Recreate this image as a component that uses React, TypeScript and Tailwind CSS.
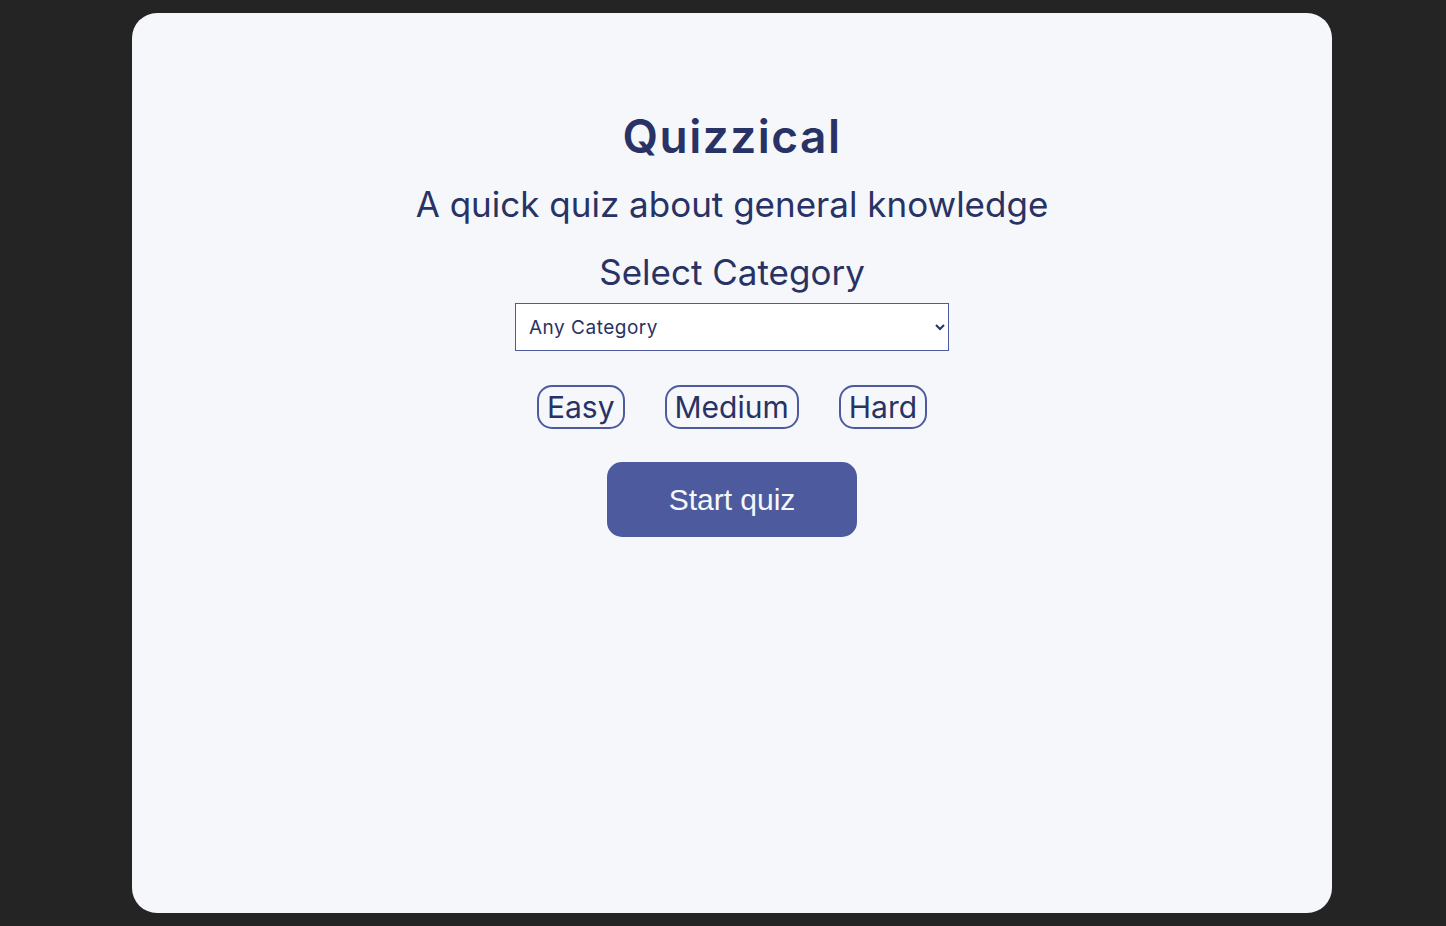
import { useState } from "react";

const levels = ["Easy", "Medium", "Hard"];

export default function App() {
  const [level, setLevel] = useState("");

  return (
    <div className="min-h-screen bg-[#242424] pt-[13px] font-['Inter',sans-serif]">
      <main className="ml-[132px] flex h-[900px] w-[1200px] flex-col items-center rounded-[25px] bg-[#f5f7fb] pt-[93px] text-[#293264]">
        <h1 className="text-[46px] font-semibold leading-[60px] tracking-[1.5px]">
          Quizzical
        </h1>
        <p className="mt-[15px] text-[35px] leading-[46px]">
          A quick quiz about general knowledge
        </p>
        <h2 className="mt-[23px] text-[35px] leading-[44px]">
          Select Category
        </h2>
        <select className="mt-[9px] h-[48px] w-[434px] border border-[#4d5b9e] bg-white pl-[9px] pr-[8px] text-[19px] text-[#293264] tracking-[0.5px]">
          <option>Any Category</option>
          <option>General Knowledge</option>
          <option>Science &amp; Nature</option>
          <option>History</option>
        </select>
        <div className="mt-[34px] flex gap-[40px]">
          {levels.map((l) => (
            <button
              key={l}
              onClick={() => setLevel(l)}
              className={`h-[44px] rounded-[15px] border-2 border-[#4d5b9e] px-[8px] text-[30px] leading-none ${
                level === l ? "bg-[#d6dbf5]" : ""
              }`}
            >
              {l}
            </button>
          ))}
        </div>
        <button className="mt-[33px] h-[75px] w-[250px] rounded-[15px] bg-[#4d5b9e] font-['Liberation_Sans',Arial,sans-serif] text-[30px] text-[#f5f7fb]">
          Start quiz
        </button>
      </main>
    </div>
  );
}
